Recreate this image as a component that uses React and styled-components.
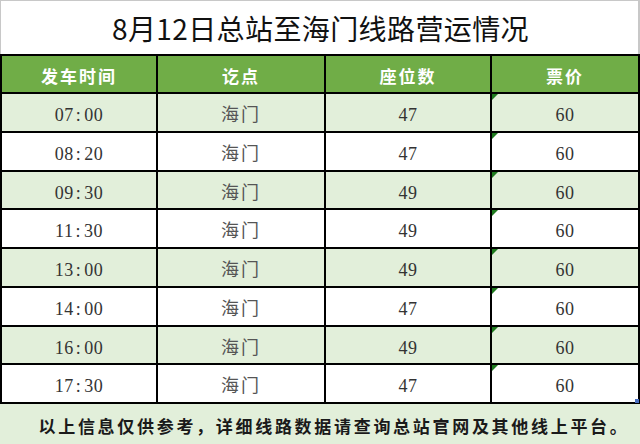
import React from "react";
import styled, { createGlobalStyle } from "styled-components";

const rows = [
  { time: "07:00", dest: "海门", seats: 47, price: 60 },
  { time: "08:20", dest: "海门", seats: 47, price: 60 },
  { time: "09:30", dest: "海门", seats: 49, price: 60 },
  { time: "11:30", dest: "海门", seats: 49, price: 60 },
  { time: "13:00", dest: "海门", seats: 49, price: 60 },
  { time: "14:00", dest: "海门", seats: 47, price: 60 },
  { time: "16:00", dest: "海门", seats: 49, price: 60 },
  { time: "17:30", dest: "海门", seats: 47, price: 60 },
];

const GlobalStyle = createGlobalStyle`
  html, body {
    margin: 0;
    padding: 0;
    background: #fff;
  }
`;

const Sheet = styled.div`
  width: 640px;
  height: 444px;
  overflow: hidden;
  display: flex;
  flex-direction: column;
  background: #fff;
`;

const Title = styled.div`
  height: 54px;
  box-sizing: border-box;
  border-top: 1px solid #c8c8c8;
  border-left: 1px solid #c8c8c8;
  border-right: 2px solid #c8c8c8;
  display: flex;
  align-items: center;
  justify-content: center;
  padding-left: 2px;
  font-family: "Noto Sans CJK SC", "Noto Sans", sans-serif;
  font-size: 28px;
  color: #111;
  letter-spacing: 0.4px;
`;

const Table = styled.table`
  width: 638px;
  border-collapse: collapse;
  table-layout: fixed;
  border: 2px solid #000;
`;

const HeadCell = styled.th`
  height: 38px;
  box-sizing: border-box;
  background: #70ad47;
  color: #fff;
  font-family: "Noto Sans CJK SC", sans-serif;
  font-weight: 700;
  font-size: 17px;
  letter-spacing: 2px;
  border: 2px solid #000;
  padding: 3px 0 0;
  text-align: center;
`;

const Row = styled.tr`
  background: ${(p) => (p.$shaded ? "#e2efda" : "#fff")};
`;

const Cell = styled.td`
  position: relative;
  box-sizing: border-box;
  height: 38.75px;
  border: 2px solid #000;
  padding: 10px 0 0;
  vertical-align: top;
  line-height: 22px;
  text-align: center;
  font-family: "Liberation Serif", "Noto Sans CJK SC", serif;
  font-size: 18px;
  color: ${(p) => (p.$muted ? "#555" : "#333")};
  letter-spacing: ${(p) => (p.$muted ? "2px" : "0.5px")};
`;

const Colon = styled.span`
  margin: 0 3px 0 2px;
`;

const Marker = styled.span`
  position: absolute;
  top: 0;
  left: 0;
  width: 0;
  height: 0;
  border-top: 6px solid #1e7a1e;
  border-right: 6px solid transparent;
`;

const Handle = styled.span`
  position: absolute;
  right: -1px;
  bottom: -1px;
  width: 4px;
  height: 4px;
  background: #4a6fc0;
`;

const Footer = styled.div`
  flex: 1;
  background: #e2efda;
  display: flex;
  align-items: center;
  justify-content: center;
  padding-left: 28px;
  padding-top: 2px;
  font-family: "Noto Sans CJK SC", serif;
  font-weight: 700;
  font-size: 17px;
  letter-spacing: 2.7px;
  color: #1a1a1a;
`;

export default function App() {
  return (
    <>
      <GlobalStyle />
      <Sheet>
        <Title>8月12日总站至海门线路营运情况</Title>
        <Table>
          <colgroup>
            <col style={{ width: 156 }} />
            <col style={{ width: 168 }} />
            <col style={{ width: 166 }} />
            <col style={{ width: 148 }} />
          </colgroup>
          <thead>
            <tr>
              <HeadCell>发车时间</HeadCell>
              <HeadCell>讫点</HeadCell>
              <HeadCell>座位数</HeadCell>
              <HeadCell>票价</HeadCell>
            </tr>
          </thead>
          <tbody>
            {rows.map((r, i) => {
              const [h, m] = r.time.split(":");
              return (
                <Row key={r.time} $shaded={i % 2 === 0}>
                  <Cell>
                    {h}
                    <Colon>:</Colon>
                    {m}
                  </Cell>
                  <Cell $muted>{r.dest}</Cell>
                  <Cell>{r.seats}</Cell>
                  <Cell>
                    <Marker />
                    {r.price}
                    {i === rows.length - 1 && <Handle />}
                  </Cell>
                </Row>
              );
            })}
          </tbody>
        </Table>
        <Footer>以上信息仅供参考，详细线路数据请查询总站官网及其他线上平台。</Footer>
      </Sheet>
    </>
  );
}
